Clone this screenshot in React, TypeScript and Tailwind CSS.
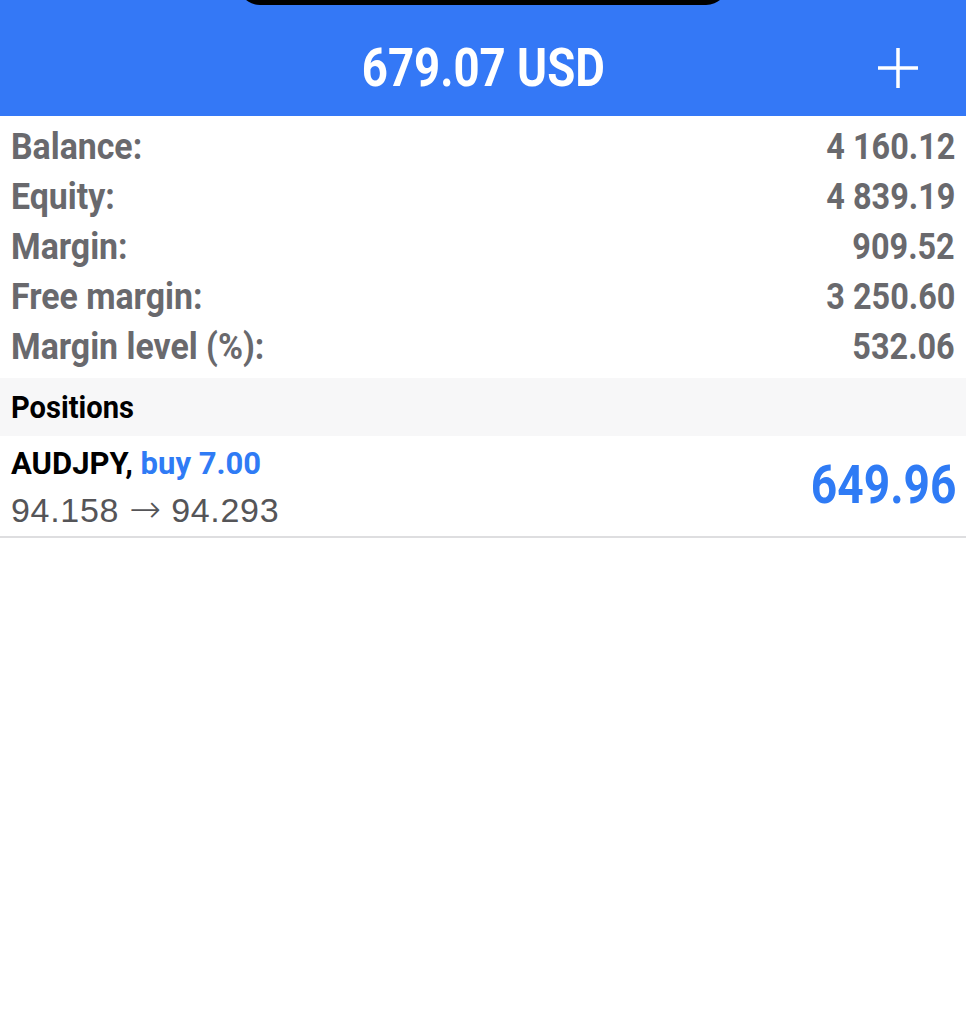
import React from 'react';

const roboto = "font-['Roboto',sans-serif]";

const rows = [
  { label: 'Balance:', value: '4 160.12' },
  { label: 'Equity:', value: '4 839.19' },
  { label: 'Margin:', value: '909.52' },
  { label: 'Free margin:', value: '3 250.60' },
  { label: 'Margin level (%):', value: '532.06' },
];

export default function App() {
  return (
    <div className="relative min-h-[1024px] w-full bg-white">
      {/* notch */}
      <div className="absolute left-[238px] top-[-20px] h-[25px] w-[490px] rounded-b-[22px] bg-black" />

      <header className="grid h-[116px] grid-cols-[1fr_auto_1fr] items-center bg-[#3478f6] pt-[20px]">
        <div />
        <h1 className={`${roboto} origin-center scale-x-[0.86] text-[53px] font-bold leading-none text-white`}>679.07 USD</h1>
        <div className="flex justify-end pr-[47px]">
          <svg width="42" height="42" viewBox="0 0 42 42" className="text-white">
            <path d="M21 1v40M1 21h40" stroke="currentColor" strokeWidth="3.5" />
          </svg>
        </div>
      </header>

      <div className="flex flex-col pt-[6px] pb-[6px]">
        {rows.map((r) => (
          <div key={r.label} className={`${roboto} flex h-[50px] items-center justify-between px-[11px] text-[36px] font-bold leading-none text-[#69696d]`}>
            <span className="inline-block origin-left scale-x-[0.94]">{r.label}</span>
            <span className="inline-block origin-right scale-x-[0.9]">{r.value}</span>
          </div>
        ))}
      </div>

      <div className={`${roboto} flex h-[58px] items-center bg-[#f7f7f8] px-[11px] text-[32px] font-bold text-black`}>
        <span className="inline-block origin-left scale-x-[0.91]">Positions</span>
      </div>

      <div className="flex h-[102px] items-center justify-between border-b-2 border-[#dedee0] pl-[11px] pr-[10px]">
        <div className="flex flex-col pt-[1px]">
          <div className={`${roboto} text-[31px] font-bold leading-[46px]`}>
            <span className="text-black">AUDJPY, </span>
            <span className="text-[#2f7bf5]">buy 7.00</span>
          </div>
          <div className="font-['Liberation_Sans',sans-serif] text-[34px] leading-[46px] tracking-[0.02em] text-[#555558]">
            94.158 <span className="font-['DejaVu_Sans',sans-serif] text-[38px] leading-none font-light tracking-normal">→</span> 94.293
          </div>
        </div>
        <div className={`${roboto} origin-right scale-x-[0.87] text-[53px] font-bold text-[#2f7bf5]`}>649.96</div>
      </div>
    </div>
  );
}
